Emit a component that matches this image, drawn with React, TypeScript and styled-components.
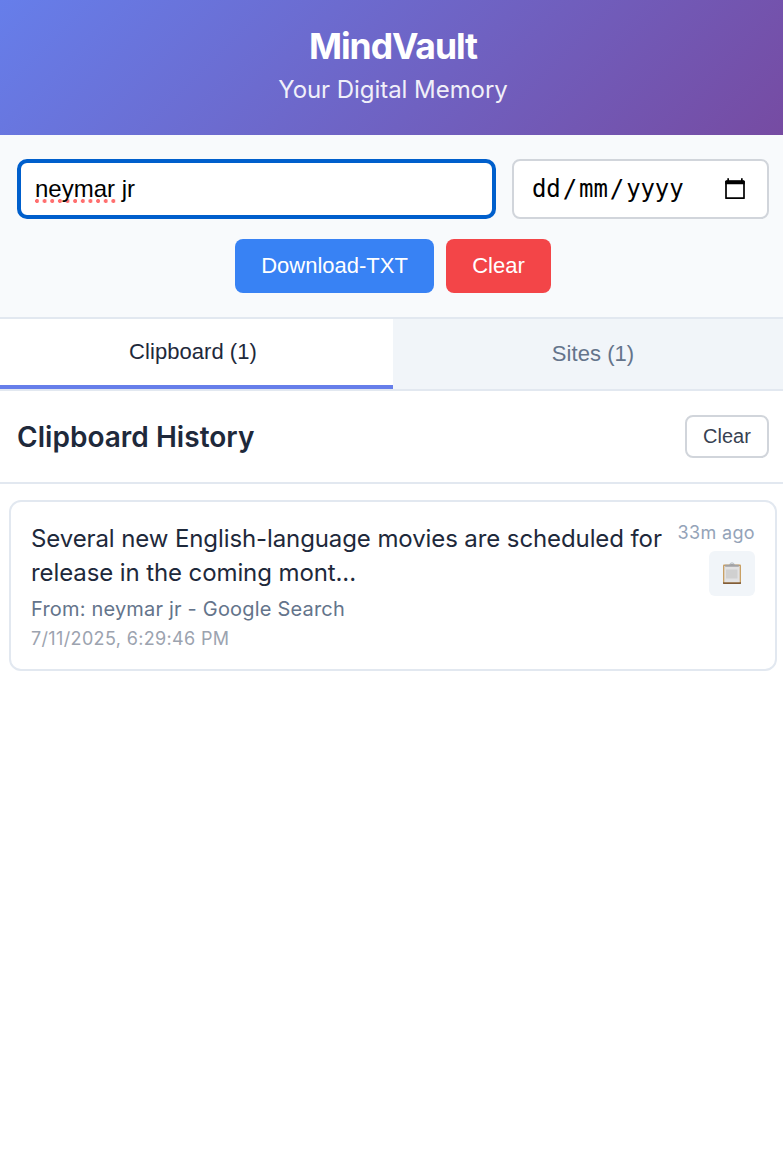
import React from "react";
import styled, { createGlobalStyle, css } from "styled-components";

const GlobalStyle = createGlobalStyle`
  *, *::before, *::after { box-sizing: border-box; }
  html, body { margin: 0; background: #fff; overflow: hidden; }
  button, input { font-family: "Liberation Sans", Arial, sans-serif; margin: 0; }
`;

const Popup = styled.div`
  width: 786px;
  height: 1159px;
  overflow: hidden;
  background: #fff;
  color: #1e293b;
  font-family: Inter, sans-serif;
`;

const Header = styled.header`
  height: 135px;
  padding-top: 24px;
  text-align: center;
  color: #fff;
  background: linear-gradient(135deg, #667eea 0%, #764ba2 100%);
`;

const Brand = styled.h1`
  margin: 0;
  font-size: 35.5px;
  line-height: 46px;
  font-weight: 700;
  letter-spacing: -1.05px;
`;

const Tagline = styled.p`
  margin: 5px 0 0;
  font-size: 24px;
  line-height: 30px;
  letter-spacing: -0.05px;
  opacity: 0.9;
`;

const Controls = styled.section`
  height: 184px;
  padding: 24px 17px 0;
  background: #f8fafc;
  border-bottom: 2px solid #e2e8f0;
`;

const Filters = styled.div`
  display: flex;
  gap: 16px;
  height: 60px;
`;

const SearchField = styled.div`
  flex: 1;
  display: flex;
  align-items: center;
  padding-left: 14px;
  border: 4px solid #005fcc;
  border-radius: 10px;
  background: #fff;
  color: #000;
  font: 24px/30px "Liberation Sans", Arial, sans-serif;
  white-space: pre;
`;

const Misspelled = styled.span`
  height: 30px;
  padding-right: 1px;
  margin-right: -1px;
  background: radial-gradient(circle at 2px 2px, #ff6f6f 1.7px, transparent 2.3px) 0 25px / 7.65px 4px repeat-x;
`;

const DateField = styled.div`
  width: 257px;
  display: flex;
  align-items: center;
  justify-content: space-between;
  padding: 0 22px 0 16px;
  border: 2px solid #d1d5db;
  border-radius: 8px;
  background: #fff;
  color: #000;
  font: 24px/30px "DejaVu Sans Mono", monospace;
  letter-spacing: -0.1px;
`;

const DatePart = styled.span`
  padding: 0 2px;
`;

const Actions = styled.div`
  display: flex;
  justify-content: center;
  gap: 12px;
  margin-top: 20px;
`;

const ActionButton = styled.button<{ $tone: string; $width: number }>`
  width: ${(p) => p.$width}px;
  height: 54px;
  padding: 0;
  border: 0;
  border-radius: 8px;
  background: ${(p) => p.$tone};
  color: #fff;
  font-size: 22px;
`;

const Tabs = styled.nav`
  display: flex;
  height: 72px;
  margin: 0 -7px;
  border-bottom: 2px solid #e2e8f0;
`;

const Tab = styled.button<{ $active?: boolean }>`
  flex: 1;
  padding: 0;
  border: 0;
  font-size: 22px;
  letter-spacing: 0.05px;
  color: #64748b;
  background: #f1f5f9;
  ${(p) =>
    p.$active &&
    css`
      color: #1e293b;
      background: #fff;
      border-bottom: 4px solid #667eea;
    `}
`;

const SectionHead = styled.div`
  display: flex;
  align-items: center;
  justify-content: space-between;
  height: 93px;
  padding: 0 17px;
  border-bottom: 2px solid #e2e8f0;
`;

const SectionTitle = styled.h2`
  margin: 0;
  font-size: 28px;
  line-height: 34px;
  font-weight: 600;
  letter-spacing: 0.03px;
`;

const OutlineButton = styled.button`
  width: 84px;
  height: 43px;
  padding: 0;
  border: 2px solid #d1d5db;
  border-radius: 8px;
  background: #fff;
  color: #374151;
  font-size: 20px;
`;

const Card = styled.article`
  display: flex;
  justify-content: space-between;
  height: 171px;
  margin: 16px 9px 0;
  padding: 20px;
  border: 2px solid #e2e8f0;
  border-radius: 12px;
`;

const Snippet = styled.p`
  margin: 0;
  font-size: 24px;
  line-height: 34px;
  letter-spacing: -0.1px;
  white-space: nowrap;
`;

const Source = styled.div`
  margin-top: 7px;
  font-size: 20px;
  line-height: 24px;
  letter-spacing: 0.19px;
  color: #64748b;
`;

const Stamp = styled.div`
  margin-top: 7px;
  font-size: 18px;
  line-height: 22px;
  letter-spacing: 0.35px;
  color: #9ca3af;
`;

const Side = styled.div`
  display: flex;
  flex-direction: column;
  align-items: flex-end;
  gap: 7px;
`;

const Age = styled.span`
  font-size: 18px;
  line-height: 22px;
  letter-spacing: 0.35px;
  color: #94a3b8;
  white-space: nowrap;
`;

const CopyButton = styled.button`
  display: grid;
  place-items: center;
  width: 46px;
  height: 45px;
  padding: 0;
  border: 0;
  border-radius: 6px;
  background: #f1f5f9;
`;

const CalendarIcon = () => (
  <svg width="20" height="22" viewBox="0 0 20 22">
    <path d="M1 3.5H19V20.2H1Z" fill="none" stroke="#000" strokeWidth="1.7" strokeLinejoin="round" />
    <path d="M1.2 2.2H18.8L19.7 3V6.2H0.3V3ZM2.3 0.3H4V3H2.3ZM16 0.3H17.7V3H16Z" fill="#000" />
  </svg>
);

const ClipboardIcon = () => (
  <svg width="20" height="23" viewBox="0 0 20 23">
    <rect x="1" y="2.5" width="18" height="19.5" rx="1" fill="#c9a064" />
    <path d="M1 20.2H19V21.3Q19 22 18.3 22H1.7Q1 22 1 21.3Z" fill="#805c38" />
    <path d="M2.3 4H17.7V20.2H2.3Z" fill="#e2e2e3" />
    <path d="M4 7.5H15.5V16.5H4Z" fill="#d0d0d0" />
    <path d="M3.2 2.8H7L8 1.8H12L13 2.8H16.8V4.8H3.2Z" fill="#a2a2a5" />
    <path d="M8 2.5Q8 .8 10 .8Q12 .8 12 2.5" fill="none" stroke="#bbc2c9" strokeWidth="1" />
  </svg>
);

export default function App() {
  return (
    <>
      <GlobalStyle />
      <Popup>
        <Header>
          <Brand>MindVault</Brand>
          <Tagline>Your Digital Memory</Tagline>
        </Header>
        <Controls>
          <Filters>
            <SearchField role="textbox">
              <Misspelled>neymar</Misspelled> jr
            </SearchField>
            <DateField>
              <span>
                <DatePart>dd</DatePart>/<DatePart>mm</DatePart>/<DatePart>yyyy</DatePart>
              </span>
              <CalendarIcon />
            </DateField>
          </Filters>
          <Actions>
            <ActionButton $tone="#3882f4" $width={199}>Download-TXT</ActionButton>
            <ActionButton $tone="#f34548" $width={105}>Clear</ActionButton>
          </Actions>
        </Controls>
        <Tabs>
          <Tab $active>Clipboard (1)</Tab>
          <Tab>Sites (1)</Tab>
        </Tabs>
        <SectionHead>
          <SectionTitle>Clipboard History</SectionTitle>
          <OutlineButton>Clear</OutlineButton>
        </SectionHead>
        <Card>
          <div>
            <Snippet>
              Several new English-language movies are scheduled for
              <br />
              release in the coming mont...
            </Snippet>
            <Source>From: neymar jr - Google Search</Source>
            <Stamp>7/11/2025, 6:29:46 PM</Stamp>
          </div>
          <Side>
            <Age>33m ago</Age>
            <CopyButton aria-label="Copy">
              <ClipboardIcon />
            </CopyButton>
          </Side>
        </Card>
      </Popup>
    </>
  );
}
